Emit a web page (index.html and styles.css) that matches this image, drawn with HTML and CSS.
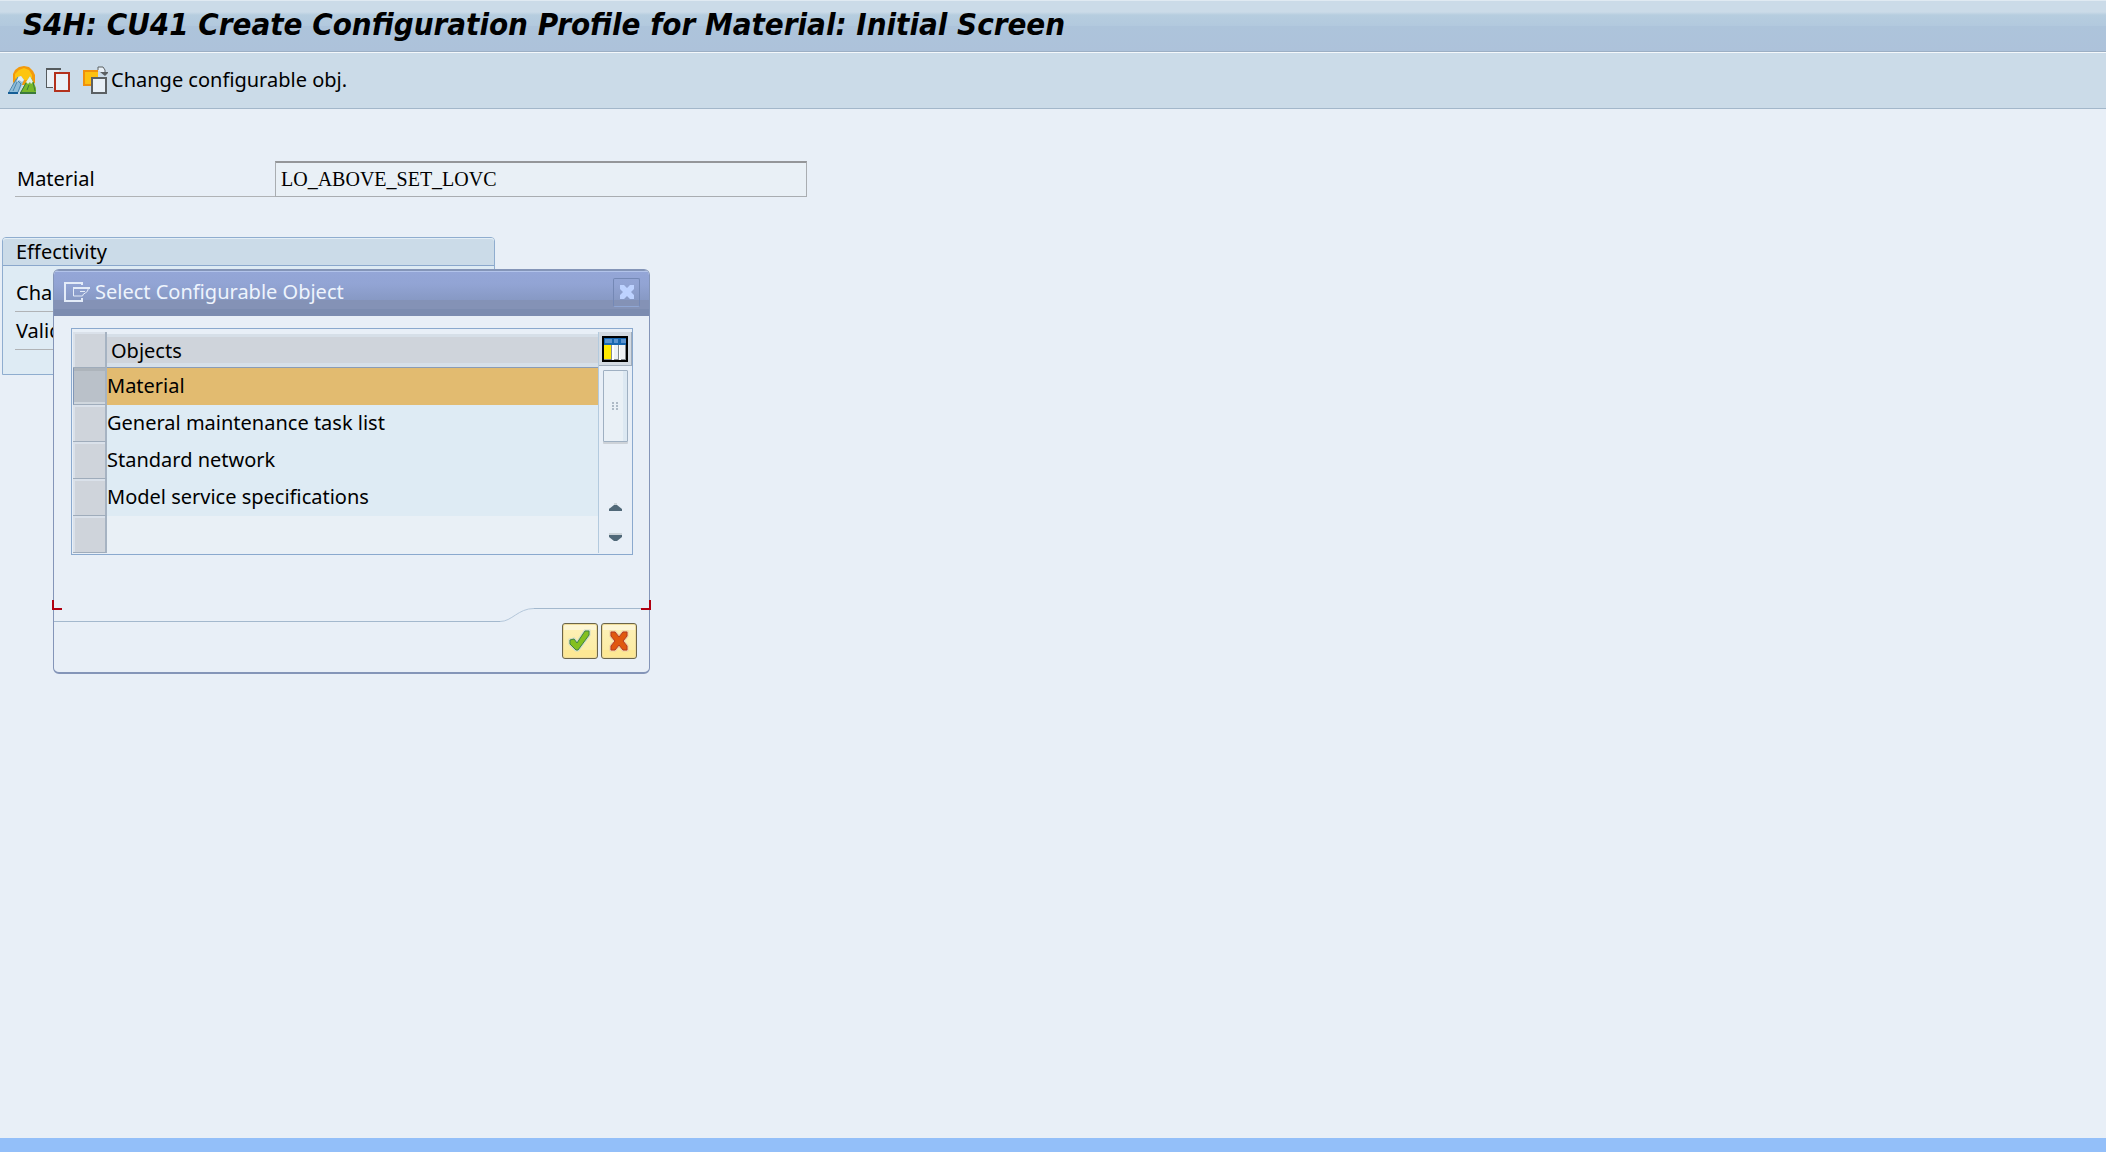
FILE: index.html
```
<!DOCTYPE html>
<html lang="en">
    <head>
        <meta charset="utf-8">
        <title>CU41 Create Configuration Profile</title>
        <link rel="stylesheet" href="styles.css">
    </head>

    <body>
        <header class="titlebar">
            <h1>S4H: CU41 Create Configuration Profile for Material: Initial Screen</h1>
        </header>

        <nav class="toolbar">
            <button type="button" class="tool" aria-label="Overview">
                <svg width="28" height="28" viewBox="0 0 28 28">
                    <path d="M5 16V8l2-4 4-3 5-1 5 1 4 4 2 4v8l-3 2H7z" fill="#f39a0b"/>
                    <path d="M7 12V8l4-4 5-2 5 2 3 5v3l-5 2H9z" fill="#fdc510"/>
                    <path d="M1 27l4-8 5-8 3-1 3 4-3 7-3 6z" fill="#8fbcd8"/>
                    <path d="M10 11l3-1 3 4-2 2-3-2-2 2z" fill="#e2eef5"/>
                    <path d="M1 26l5-9 4-6M10 15l3 3-3 8M9 16l-4 9" fill="none" stroke="#4a87b0" stroke-width="1"/>
                    <path d="M0 27h10" stroke="#155e96" stroke-width="2"/>
                    <path d="M12 27l5-9 5-8 3 5 3 7v5z" fill="#77b82a"/>
                    <path d="M18 16l4-6 3 6-2 2-1-2-2 2z" fill="#e4efe6"/>
                    <path d="M12 27h16M18 17l-5 9M25 16l2 9M21 19l-2 5" fill="none" stroke="#3a7a3c" stroke-width="1"/>
                    <path d="M12 27h16" stroke="#3a7a3c" stroke-width="2"/>
                </svg>
            </button>
            <button type="button" class="tool" aria-label="Copy">
                <svg width="24" height="24" viewBox="0 0 24 24">
                    <path d="M0 0h15v2h-2v18H0z" fill="#e8f0f7"/>
                    <path d="M0.500 1v19M0 19.500h7" fill="none" stroke="#555b5e" stroke-width="1"/>
                    <path d="M0 1h15" stroke="#555b5e" stroke-width="2"/>
                    <rect x="9" y="5" width="14" height="18" fill="#e8f0f7" stroke="#b3311c" stroke-width="2"/>
                </svg>
            </button>
            <button type="button" class="tool change">
                <svg width="28" height="28" viewBox="0 0 28 28">
                    <rect x="1" y="5" width="14" height="15" fill="#fdc010"/>
                    <path d="M15 5H1v14h7" fill="none" stroke="#f0900c" stroke-width="2"/>
                    <rect x="9" y="12" width="14" height="15" fill="#e8f0f7" stroke="#5b6063" stroke-width="2"/>
                    <path d="M15 4V1h5l2 3v5" fill="#e8f0f7" stroke="#5b6063" stroke-width="1"/>
                    <path d="M17 6h8v1l-3 3z" fill="#5b6063"/>
                </svg>
                <span>Change configurable obj.</span>
            </button>
        </nav>

        <main>
            <div class="field">
                <label for="material">Material</label>
                <input type="text" id="material" value="LO_ABOVE_SET_LOVC" readonly>
            </div>

            <section class="group">
                <h2>Effectivity</h2>
                <div class="group-body">
                    <p>Change</p>
                    <p>Valid</p>
                </div>
            </section>
        </main>

        <footer class="statusbar"></footer>

        <div class="dialog" role="dialog" aria-labelledby="dialog-title">
            <div class="dialog-title">
                <svg width="27" height="20" viewBox="0 0 27 20">
                    <path d="M18 3V1H1v18h17v-3" fill="none" stroke="#e4ecf8" stroke-width="2"/>
                    <path d="M9.500 6v8h9l1-2 2-1 2-2 1-3" fill="none" stroke="#e4ecf8" stroke-width="1"/>
                    <path d="M9 6h17" stroke="#e4ecf8" stroke-width="2"/>
                    <path d="M16 9.500h5" stroke="#e4ecf8" stroke-width="1"/>
                </svg>
                <h2 id="dialog-title">Select Configurable Object</h2>
                <button type="button" class="close" aria-label="Close">
                    <svg width="14" height="14" viewBox="0 0 14 14">
                        <path d="M0 0h4l3 3 3-3h4v4l-3 3 3 3v4h-4l-3-3-3 3H0v-4l3-3-3-3z" fill="#bdd2ff"/>
                    </svg>
                </button>
            </div>

            <div class="dialog-body">
                <div class="grid">
                    <table>
                        <thead>
                            <tr><th class="sel"></th><th>Objects</th></tr>
                        </thead>
                        <tbody>
                            <tr class="active"><td class="sel"></td><td>Material</td></tr>
                            <tr><td class="sel"></td><td>General maintenance task list</td></tr>
                            <tr><td class="sel"></td><td>Standard network</td></tr>
                            <tr><td class="sel"></td><td>Model service specifications</td></tr>
                            <tr class="empty"><td class="sel"></td><td></td></tr>
                        </tbody>
                    </table>
                    <div class="side">
                        <button type="button" class="config" aria-label="Table settings">
                            <svg width="26" height="26" viewBox="0 0 26 26">
                                <rect width="26" height="26" fill="#000"/>
                                <rect x="2" y="2" width="22" height="22" fill="#fff"/>
                                <path d="M2 2h22v7H2z" fill="#1766b0"/>
                                <path d="M3 3h7v4H3zM12 3h4v4h-4zM19 3h5v4h-5z" fill="#5a93d0"/>
                                <path d="M2 9h7v14H2z" fill="#ffe800"/>
                                <path d="M12 9h4v14h-4zM18 9h5v14h-5z" fill="#edf1f5"/>
                                <path d="M9 9h1v15H2v-1h7zM16 9h1v15h-5v-1h4zM23 9h1v15h-5v-1h4z" fill="#858b90"/>
                            </svg>
                        </button>
                        <div class="thumb">
                            <svg width="7" height="9" viewBox="0 0 7 9">
                                <path d="M0 0h2v2H0zM4 0h2v2H4zM0 3h2v2H0zM4 3h2v2H4zM0 6h2v2H0zM4 6h2v2H4z" fill="#aebac6"/>
                            </svg>
                        </div>
                        <button type="button" class="arrow" aria-label="Scroll up">
                            <svg width="13" height="8" viewBox="0 0 13 8">
                                <path d="M5 0h3v2H5zM0 5h2v2H0z" fill="#cbd3d8"/>
                                <path d="M0 8V6l5-4h3l5 4v2z" fill="#506878"/>
                            </svg>
                        </button>
                        <button type="button" class="arrow" aria-label="Scroll down">
                            <svg width="13" height="8" viewBox="0 0 13 8">
                                <path d="M0 0h13v2H0z" fill="#cbd3d8"/>
                                <path d="M0 2h13v2L8 8H5L0 4z" fill="#506878"/>
                            </svg>
                        </button>
                    </div>
                </div>
            </div>

            <!-- step line between the content and the buttons -->
            <div class="divider">
                <span class="low"></span>
                <svg width="34" height="15" viewBox="0 0 34 15">
                    <path d="M0 14.500C12 14.500 18 1.500 34 1.500" fill="none" stroke="#b4c7da"/>
                </svg>
                <span class="high"></span>
            </div>

            <div class="actions">
                <button type="button" class="action" aria-label="Continue">
                    <svg width="24" height="24" viewBox="0 0 24 24">
                        <path d="M2 11l4-1 3 4 8-12h4v4L10 21H8L2 15z" fill="none" stroke="#d0dcc8" stroke-width="3"/>
                        <path d="M2 11l4-1 3 4 8-12h4v4L10 21H8L2 15z" fill="#84c020" stroke="#3f8341" stroke-width="1"/>
                    </svg>
                </button>
                <button type="button" class="action" aria-label="Cancel">
                    <svg width="24" height="24" viewBox="0 0 24 24">
                        <path d="M4 3h4l4 5 4-5h4v4l-4 5 4 5v4h-4l-4-5-4 5H4v-4l4-5-4-5z" fill="none" stroke="#eccda6" stroke-width="3"/>
                        <path d="M4 3h4l4 5 4-5h4v4l-4 5 4 5v4h-4l-4-5-4 5H4v-4l4-5-4-5z" fill="#e0590f" stroke="#b63a1c" stroke-width="1"/>
                    </svg>
                </button>
            </div>

            <span class="corner left"></span>
            <span class="corner right"></span>
        </div>
    </body>
</html>
```

FILE: styles.css
```
* {
    box-sizing: border-box;
}

body {
    margin: 0;
    min-height: 100vh;
    display: flex;
    flex-direction: column;
    background-color: #e8eff7;
    color: #000;
    font-family: "Noto Sans", sans-serif;
    font-size: 20px;
    line-height: 28px;
}

h1, h2, p {
    margin: 0;
    font-weight: normal;
}

button {
    margin: 0;
    padding: 0;
    border: none;
    background: none;
    color: inherit;
    font: inherit;
}

svg {
    display: block;
    flex: none;
}

/* title and toolbar */

.titlebar {
    height: 52px;
    padding: 3px 23px;
    background: linear-gradient(#cbdbe8 11px, #b6cddf 14px, #b2c9de 25px, #adc4db 25px, #adc2da 50px);
    border-top: 1px solid #e0eaf2;
    border-bottom: 1px solid #9cafc4;
}

.titlebar h1 {
    font-family: "DejaVu Sans Condensed", "DejaVu Sans", sans-serif;
    font-size: 31px;
    font-weight: bold;
    font-style: italic;
    line-height: 40px;
    white-space: nowrap;
}

.toolbar {
    display: flex;
    align-items: center;
    gap: 10px;
    height: 57px;
    padding: 0 8px 2px;
    background-color: #cbdbe8;
    border-top: 1px solid #f4f8fb;
    border-bottom: 1px solid #a3b7ca;
}

.change {
    display: flex;
    align-items: center;
    margin-left: 3px;
}

/* form */

main {
    flex: 1;
    padding-top: 52px;
}

.field {
    display: flex;
    width: 792px;
    height: 36px;
    margin-left: 15px;
}

.field label {
    width: 260px;
    padding: 4px 2px 0;
    border-bottom: 1px solid #b0b3b6;
}

.field input {
    flex: 1;
    min-width: 0;
    padding: 0 5px;
    border: 1px solid #a9adb1;
    border-top: 2px solid #949699;
    background-color: #e9f0f6;
    font-family: "Liberation Serif", serif;
    font-size: 20px;
    color: #000;
    outline: none;
}

.group {
    width: 493px;
    height: 138px;
    margin: 40px 0 0 2px;
    border: 1px solid #8fadcf;
    border-radius: 4px 4px 0 0;
    background-color: #deebf4;
}

.group h2 {
    height: 28px;
    padding-left: 13px;
    border-bottom: 1px solid #8aa7cc;
    border-radius: 3px 3px 0 0;
    background-color: #cbdbe8;
    box-shadow: inset 0 1px #e3eef6;
    font-size: 20px;
}

.group-body {
    padding: 8px 12px;
}

/* labels are cut where the popup begins */
.group-body p {
    width: 38px;
    height: 38px;
    padding: 5px 0 0 1px;
    border-bottom: 1px solid #b0b3b6;
    overflow: hidden;
    white-space: nowrap;
}

.statusbar {
    height: 14px;
    background-color: #93bff9;
}

/* popup */

.dialog {
    position: absolute;
    left: 53px;
    top: 269px;
    width: 597px;
    border: 1px solid #8495b8;
    border-bottom-width: 2px;
    border-radius: 6px;
    background-color: #e8eff7;
}

.dialog-title {
    display: flex;
    align-items: center;
    height: 46px;
    padding: 0 9px 2px 10px;
    border-radius: 5px 5px 0 0;
    background: linear-gradient(#8495b8 1px, #b2c3ea 1px, #b2c3ea 2px, #94a6d7 2px, #92a4d4 14px, #8799c4 30px, #8492b6 30px, #8492b6 39px, #7c8cb0 39px);
}

.dialog-title h2 {
    flex: 1;
    padding: 0 4px;
    color: #eef4fd;
    font-size: 20px;
}

.close {
    display: flex;
    align-items: center;
    justify-content: center;
    width: 27px;
    height: 29px;
    border: 1px solid #7488b5;
    border-bottom-color: #8fa6d4;
    border-radius: 2px;
}

.dialog-body {
    height: 291px;
    padding: 12px 16px 0 17px;
}

.grid {
    display: flex;
    align-items: flex-start;
    height: 227px;
    padding: 3px 1px 0;
    border: 1px solid #8aa9ce;
}

table {
    flex: 1;
    border-collapse: separate;
    border-spacing: 0;
    border-right: 1px solid #b3cade;
}

tr {
    height: 37px;
}

thead tr {
    height: 36px;
}

th, td {
    padding: 0;
    text-align: left;
    font-weight: normal;
    white-space: nowrap;
    background-color: #deebf4;
}

td {
    padding-bottom: 1px;
}

th {
    padding: 2px 4px 0;
    border-bottom: 1px solid #8a9cb5;
    background: linear-gradient(#e8eff7 2px, #d6dfe8 2px, #d6dfe8 5px, #cfd4db 5px, #cfd4db 31px, #d6dfe8 31px);
}

.sel {
    width: 34px;
    padding: 0;
    border-right: 2px solid #a6b3c2;
    border-bottom: 1px solid #9facbb;
    background: #cfd4db;
    box-shadow: inset 2px 2px #dae1ea;
}

.active td {
    background-color: #e2bb70;
}

.active .sel {
    background-color: #bac1c9;
    border-left: 1px solid #8298b8;
    box-shadow: inset 0 3px #adb4bb, inset 0 -2px #d0d7de;
}

.empty td {
    background-color: #e9f0f6;
}

.empty .sel {
    background-color: #cfd4db;
}

.side {
    display: flex;
    flex-direction: column;
    align-items: center;
    width: 32px;
}

.config {
    padding: 4px 3px 3px;
    border-right: 1px solid #9facbb;
    border-bottom: 1px solid #9facbb;
    background-color: #d3dae2;
}

.thumb {
    display: flex;
    flex: none;
    align-items: center;
    justify-content: center;
    width: 25px;
    height: 72px;
    margin: 4px 0 61px;
    border: 1px solid #9fb0c2;
    border-radius: 1px;
    background-color: #e9f0f6;
    box-shadow: inset -4px 0 #dce8f2, 0 2px #cdd2d8;
}

.arrow + .arrow {
    margin-top: 22px;
}

.divider {
    display: flex;
    align-items: flex-start;
    height: 15px;
}

.low {
    width: 446px;
    height: 15px;
    border-bottom: 1px solid #a3b8cd;
}

.high {
    flex: 1;
    height: 2px;
    border-bottom: 1px solid #a3b8cd;
}

.actions {
    display: flex;
    justify-content: flex-end;
    gap: 3px;
    padding: 1px 12px 13px;
}

.action {
    display: flex;
    align-items: center;
    justify-content: center;
    width: 36px;
    height: 36px;
    border: 1px solid #6b6549;
    border-radius: 3px;
    background: linear-gradient(#fdf6d4 6px, #fdf0b4 6px, #fceda6 26px, #fde894 26px);
    box-shadow: inset 0 0 0 1px #efdc9a;
}

/* resize marks on the popup edges */

.corner {
    position: absolute;
    top: 330px;
    width: 10px;
    height: 10px;
    border: 0 solid #b00010;
    border-bottom-width: 2px;
}

.left {
    left: -2px;
    border-left-width: 2px;
}

.right {
    right: -2px;
    border-right-width: 2px;
}
```
